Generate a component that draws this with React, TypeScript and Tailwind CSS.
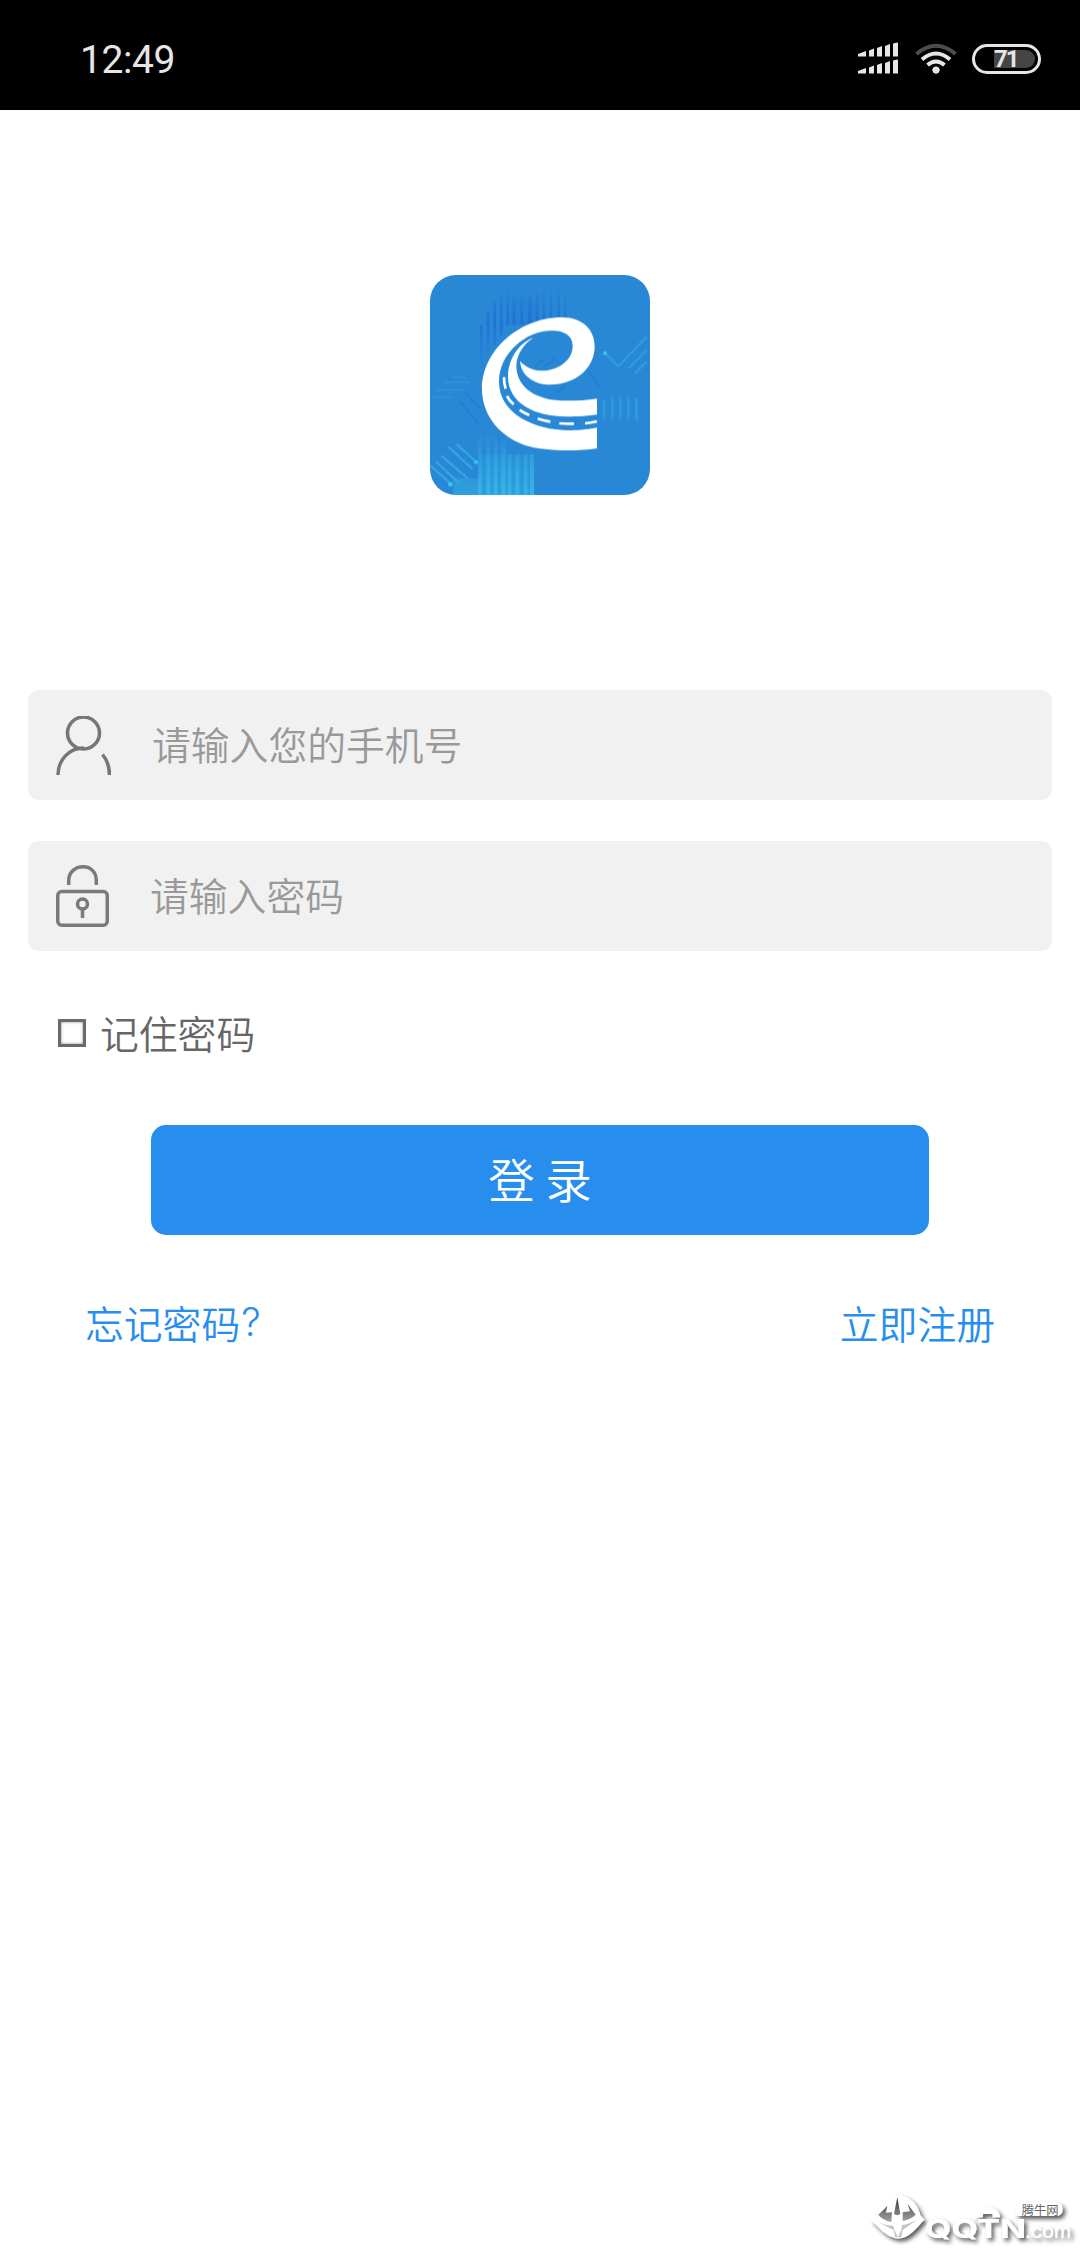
import { useState } from 'react';
import type { ReactNode } from 'react';

function StatusBar() {
  return (
    <div className="h-[110px] bg-black flex items-center justify-between pl-[80px] pr-[39px]">
      <span className="font-['Roboto'] font-normal text-[39px] leading-none text-[#e6e6e6] tracking-[-0.4px] pt-[11px]">12:49</span>
      <div className="flex items-center pt-[7px]">
        <svg width="41" height="33" viewBox="0 0 41 33" fill="#e6e6e6">
          {[0, 17].map(y => (
            <g key={y} transform={`translate(0 ${y})`}>
              <path d="M0 12 L8 9 V14.500 H0Z" />
              <path d="M11 8.500 L16 6.500 V14.500 H11Z" />
              <path d="M19 6 L24 4 V14.500 H19Z" />
              <path d="M27 4 L32 2 V14.500 H27Z" />
              <path d="M35 2 Q36 0.500 40 0.500 V14.500 H35Z" />
            </g>
          ))}
        </svg>
        <svg className="ml-[16px]" width="42" height="32" viewBox="0 0 42 32" fill="none" strokeWidth="4">
          <path d="M1.500 11 Q21 -5.500 40.500 11" stroke="#4d4d4d" />
          <path d="M7 16.500 Q21 4.500 35 16.500" stroke="#e6e6e6" />
          <path d="M12.500 22 Q21 15 29.500 22" stroke="#e6e6e6" />
          <path d="M17 27 Q21 22.500 25 27 L21 31Z" fill="#e6e6e6" strokeWidth="0" />
          <circle cx="21" cy="27" r="3.500" fill="#e6e6e6" />
        </svg>
        <div className="ml-[15px] w-[69px] h-[30px] rounded-full border-[3px] border-[#e6e6e6] p-[3px] flex">
          <div className="ml-[16px] flex-1 h-[18px] bg-[#444] rounded-r-full flex items-center">
            <span className="font-['Roboto'] font-bold text-[24px] leading-none text-[#e6e6e6] tracking-[-2px]">71</span>
          </div>
        </div>
      </div>
    </div>
  );
}

function Logo() {
  return (
    <svg className="mx-auto" width="220" height="220" viewBox="30 30 660 660" fill="none">
      <defs>
        <clipPath id="tile">
          <rect x="30" y="30" width="660" height="660" rx="78" />
        </clipPath>
        <linearGradient id="deep" x1="0" y1="60" x2="0" y2="300" gradientUnits="userSpaceOnUse">
          <stop offset="0" stopColor="#2273d2" stopOpacity="0" />
          <stop offset="0.45" stopColor="#206fd3" stopOpacity="0.9" />
          <stop offset="1" stopColor="#2273d2" stopOpacity="0.1" />
        </linearGradient>
        <linearGradient id="glow" x1="0" y1="500" x2="0" y2="690" gradientUnits="userSpaceOnUse">
          <stop offset="0" stopColor="#35b4e6" stopOpacity="0" />
          <stop offset="1" stopColor="#35b4e6" />
        </linearGradient>
      </defs>
      <g clipPath="url(#tile)">
        <rect x="30" y="30" width="660" height="660" fill="#2888d6" />
        <g fill="url(#deep)">
          <rect x="180" y="180" width="8" height="110" />
          <rect x="200" y="140" width="8" height="120" />
          <rect x="220" y="110" width="8" height="130" />
          <rect x="240" y="70" width="8" height="140" />
          <rect x="259" y="50" width="8" height="130" />
          <rect x="278" y="95" width="8" height="85" />
          <rect x="301" y="95" width="8" height="85" />
          <rect x="324" y="95" width="12" height="80" />
          <rect x="347" y="80" width="9" height="90" />
          <rect x="368" y="60" width="8" height="100" />
          <rect x="389" y="50" width="8" height="110" />
          <rect x="412" y="65" width="8" height="95" />
          <rect x="433" y="100" width="6" height="60" />
          <rect x="260" y="95" width="90" height="85" opacity="0.3" />
        </g>
        <g stroke="#2278d3" strokeWidth="7" opacity="0.6">
          <path d="M345 305 L375 280 M375 305 L405 280 M310 180 L335 160 M410 385 L435 362 M505 320 L540 365 M130 375 L180 430 M120 410 L175 475" />
        </g>
        <g fill="url(#glow)">
          <rect x="174" y="510" width="12" height="180" />
          <rect x="199" y="510" width="12" height="180" />
          <rect x="221" y="520" width="12" height="170" />
          <rect x="243" y="530" width="14" height="160" />
          <rect x="264" y="568" width="10" height="122" />
          <rect x="286" y="568" width="12" height="122" />
          <rect x="312" y="568" width="10" height="122" />
          <rect x="330" y="568" width="12" height="122" />
          <rect x="100" y="640" width="75" height="50" opacity="0.5" />
          <rect x="186" y="568" width="155" height="122" opacity="0.5" />
        </g>
        <g stroke="#34ade3" strokeWidth="7" opacity="0.85">
          <path d="M110 538 L168 590 M85 545 L158 612 M64 572 L143 640 M48 590 L118 655 M30 600 L92 656" />
          <path d="M595 305 L680 215 M625 310 L680 255 M645 325 L680 290 M555 264 L595 305" opacity="0.7" />
          <path d="M70 352 H150 M100 337 H140 M50 376 H135 M40 396 H95" strokeWidth="5" opacity="0.4" />
        </g>
        <g fill="#32a1df" opacity="0.7">
          <rect x="548" y="405" width="8" height="60" />
          <rect x="573" y="395" width="8" height="70" />
          <rect x="597" y="395" width="8" height="70" />
          <rect x="621" y="395" width="8" height="70" />
          <rect x="645" y="400" width="9" height="65" />
        </g>
        <g fill="#3cc8ee">
          <circle cx="168" cy="591" r="6" />
          <circle cx="91" cy="658" r="7" />
          <circle cx="555" cy="264" r="6" />
        </g>
        <g fill="#fff">
          <path d="M531 550 C465 560 385 558 330 545 C240 520 186 450 186 372 C186 255 300 157 425 157 C490 157 524 195 524 245 C524 310 465 359 392 359 C340 359 303 330 300 288 C320 310 345 317 365 317 C415 317 458 285 458 243 C458 210 430 197 395 197 C318 197 237 265 237 350 C237 445 340 496 450 496 C480 496 510 492 531 488Z" />
          <path d="M340 218 C290 237 264 290 264 335 C264 415 345 455 440 455 C475 455 510 452 531 449 L531 401 C500 406 470 407 440 407 C350 407 289 370 289 300 C291 268 310 238 340 218Z" />
        </g>
        <g stroke="#fff" strokeWidth="8">
          <path d="M252 336 Q252 355 257 371 M261 393 Q268 408 281 418 M299 435 Q312 444 328 450 M353 461 Q370 467 391 470 M418 475 Q440 477 462 476 M495 475 Q512 473 531 469" />
        </g>
      </g>
    </svg>
  );
}

function UserIcon() {
  return (
    <svg width="55" height="59" viewBox="0 0 55 59" fill="none" stroke="#767676" strokeWidth="3.5">
      <circle cx="27.500" cy="17" r="16" />
      <path d="M2 59 C2 44 13 32 28 32" />
      <path d="M46.500 38.500 C51 44 53.500 51 53.500 59" />
    </svg>
  );
}

function LockIcon() {
  return (
    <svg width="53" height="62" viewBox="0 0 53 62" fill="none" stroke="#7a7a7a" strokeWidth="3.500">
      <path d="M12.700 20 V15.500 C12.700 7.500 19 1.750 27 1.750 C35 1.750 40.300 7.500 40.300 15.500 V20" />
      <rect x="1.750" y="26.500" width="49.500" height="33.750" rx="4" />
      <circle cx="26.500" cy="39" r="5" />
      <path d="M26.500 44 V53" />
    </svg>
  );
}

type FieldProps = {
  icon: ReactNode;
  type: string;
  placeholder: string;
  className: string;
};

function Field({ icon, type, placeholder, className }: FieldProps) {
  return (
    <label className="h-[110px] rounded-[11px] bg-[#f1f1f1] flex items-center pl-[28px]">
      {icon}
      <input
        type={type}
        placeholder={placeholder}
        className={`flex-1 min-w-0 h-full pb-[4px] bg-transparent outline-none text-[38.8px] placeholder:text-[#999] ${className}`}
      />
    </label>
  );
}

function Watermark() {
  return (
    <div className="absolute right-0 bottom-0 w-[220px] h-[78px]">
      <svg width="220" height="78" viewBox="0 0 660 234">
        <defs>
          <filter id="soft" x="-20%" y="-20%" width="150%" height="150%">
            <feDropShadow dx="8" dy="9" stdDeviation="6" floodColor="#000" floodOpacity="0.65" />
          </filter>
          <linearGradient id="horn" x1="0" y1="80" x2="0" y2="160" gradientUnits="userSpaceOnUse">
            <stop offset="0" stopColor="#333" />
            <stop offset="1" stopColor="#aaa" />
          </linearGradient>
        </defs>
        <g filter="url(#soft)" fill="#fff">
          <path d="M32 150 C48 148 48 130 58 112 C76 83 100 75 118 76 C145 79 166 96 176 120 C180 133 184 144 194 148 C182 160 174 172 160 184 C140 204 116 211 98 202 C70 192 54 168 32 150Z" />
          <path d="M347 142 C347 102 420 102 420 142 H398 V132 H369 V142Z" />
          <path d="M492 97 H590 Q608 99 608 118 Q608 138 588 138 H478 Q464 138 468 124 Q472 98 492 97Z" />
          <text x="194" y="205" fontFamily="Inter, sans-serif" fontWeight="700" fontSize="78" textLength="305" lengthAdjust="spacingAndGlyphs">QQTN</text>
          <text x="496" y="205" fontFamily="Inter, sans-serif" fontWeight="400" fontSize="60" textLength="138" lengthAdjust="spacingAndGlyphs">.com</text>
        </g>
        <path d="M112 82 L121 132 Q112 139 102 132Z M82 108 L78 128 L96 127 L94 156 Q66 150 55 134Z M143 102 L150 124 L128 127 L128 153 Q154 147 167 134Z" fill="url(#horn)" />
        <path d="M54 156 Q110 182 170 150 L128 180 L124 202 H106 L101 180Z" fill="#777" opacity="0.45" />
        <path d="M98 160 Q112 165 128 158 L124 180 L114 202 L103 180Z" fill="#fff" />
        <text x="485" y="134" fontFamily="Noto Sans CJK SC, sans-serif" fontWeight="400" fontSize="37" fill="#666">腾牛网</text>
      </svg>
    </div>
  );
}

export default function App() {
  const [remember, setRemember] = useState(false);

  return (
    <div className="relative w-[1080px] h-[2248px] overflow-hidden bg-white font-['Noto_Sans_CJK_SC',sans-serif] font-[350]">
      <StatusBar />

      <div className="pt-[165px]">
        <Logo />
      </div>

      <form className="mt-[195px] px-[28px] flex flex-col" onSubmit={e => e.preventDefault()}>
        <div className="flex flex-col gap-[41px]">
          <Field icon={<UserIcon />} type="tel" placeholder="请输入您的手机号" className="ml-[41px]" />
          <Field icon={<LockIcon />} type="password" placeholder="请输入密码" className="ml-[41px]" />
        </div>

        {/* Remember password */}
        <label className="mt-[51px] ml-[30px] h-[60px] flex items-center text-[38.8px] leading-none text-[#666]">
          <input
            type="checkbox"
            checked={remember}
            onChange={e => setRemember(e.target.checked)}
            className="appearance-none w-[28px] h-[28px] border-[3px] border-[#6b6b6b] bg-white checked:bg-[#288eee] shadow-[inset_0_0_3px_#888] mt-[2px] mr-[14px]"
          />
          记住密码
        </label>

        <button type="submit" className="mt-[63px] mx-[123px] h-[110px] pb-[3px] rounded-[15px] bg-[#288eee] text-white text-[46.5px] leading-none">
          登 录
        </button>

        <div className="mt-[57px] px-[57px] h-[60px] flex items-center justify-between text-[38.8px] leading-none text-[#288eee]">
          <a href="#forgot" className="flex items-center">
            忘记密码<span className="font-['Inter'] font-light text-[38.8px] ml-[1px]">?</span>
          </a>
          <a href="#register">立即注册</a>
        </div>
      </form>

      <Watermark />
    </div>
  );
}
